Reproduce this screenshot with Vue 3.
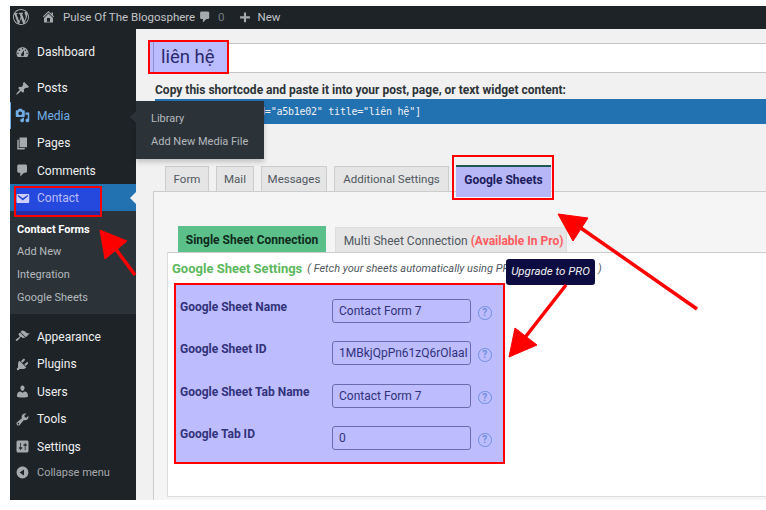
<script setup>
const icons = {
  dashboard: 'M3.76 16h12.48c1.1-1.37 1.76-3.11 1.76-5 0-4.42-3.58-8-8-8s-8 3.58-8 8c0 1.89.66 3.63 1.76 5zM10 4c.55 0 1 .45 1 1s-.45 1-1 1-1-.45-1-1 .45-1 1-1zM6 6c.55 0 1 .45 1 1s-.45 1-1 1-1-.45-1-1 .45-1 1-1zm8 0c.55 0 1 .45 1 1s-.45 1-1 1-1-.45-1-1 .45-1 1-1zm-5.37 5.55L12 7v6c0 1.1-.9 2-2 2s-2-.9-2-2c0-.57.24-1.08.63-1.45zM4 10c.55 0 1 .45 1 1s-.45 1-1 1-1-.45-1-1 .45-1 1-1zm12 0c.55 0 1 .45 1 1s-.45 1-1 1-1-.45-1-1 .45-1 1-1z',
  pin: 'M10.44 3.02l1.82-1.82 6.36 6.35-1.83 1.82c-1.05-.68-2.48-.57-3.41.36l-.75.75c-.92.93-1.04 2.35-.35 3.41l-1.83 1.82-2.41-2.41-2.8 2.79c-.42.42-3.38 2.71-3.8 2.29s1.86-3.39 2.28-3.81l2.79-2.79L4.1 9.36l1.83-1.82c1.05.69 2.48.57 3.4-.36l.75-.75c.93-.92 1.05-2.35.36-3.41z',
  media: 'M13 11V4c0-.55-.45-1-1-1h-1.67L9 1H5L3.67 3H2c-.55 0-1 .45-1 1v7c0 .55.45 1 1 1h10c.55 0 1-.45 1-1zM7 4.5c1.38 0 2.5 1.12 2.5 2.5S8.38 9.5 7 9.5 4.5 8.38 4.5 7 5.62 4.5 7 4.5zM14 6h5v10.5c0 1.38-1.12 2.5-2.5 2.5S14 17.88 14 16.5s1.12-2.5 2.5-2.5c.17 0 .34.02.5.05V9h-3V6zm-4 8.05V13h2v3.5c0 1.38-1.12 2.5-2.5 2.5S7 17.88 7 16.5 8.12 14 9.5 14c.17 0 .34.02.5.05z',
  page: 'M6 15V2h10v13H6zm-1 1h8v2H3V5h2v11z',
  comment: 'M5 2h9c1.1 0 2 .9 2 2v7c0 1.1-.9 2-2 2h-2l-5 5v-5H5c-1.1 0-2-.9-2-2V4c0-1.1.9-2 2-2z',
  email: 'M3.87 4h13.25C18.37 4 19 4.59 19 5.79v8.42c0 1.19-.63 1.79-1.88 1.79H3.87c-1.25 0-1.88-.6-1.88-1.79V5.79c0-1.2.63-1.79 1.88-1.79zm6.62 8.6l6.74-5.53c.24-.2.43-.66.13-1.07-.29-.41-.82-.42-1.17-.17l-5.7 3.86L4.8 5.83c-.35-.25-.88-.24-1.17.17-.3.41-.11.87.13 1.07z',
  appearance: 'M14.48 11.06L7.41 3.99l1.5-1.5c.5-.56 2.3-.47 3.51.32 1.21.8 1.43 1.28 2.91 2.1 1.18.64 2.45 1.26 4.45.85zm-.71.71L6.7 4.7 4.93 6.47c-.39.39-.39 1.02 0 1.41l1.06 1.06c.39.39.39 1.03 0 1.42-.6.6-1.43 1.11-2.21 1.69-.35.26-.7.53-1.01.84C1.43 13.23.4 14.8 1.2 15.6c.8.8 2.37-.23 3.71-1.57.31-.31.58-.66.85-1.02.57-.78 1.08-1.61 1.69-2.21.39-.39 1.02-.39 1.41 0l1.06 1.06c.39.39 1.02.39 1.41 0z',
  plugin: 'M13.11 4.36L9.87 7.6 8 5.73l3.24-3.24c.35-.34 1.05-.2 1.56.32.52.51.66 1.21.31 1.55zm-8 1.77l.91-1.12 9.01 9.01-1.19.84c-.71.71-2.63 1.16-3.82 1.16H6.14L4.9 17.26c-.59.59-1.54.59-2.12 0-.59-.58-.59-1.53 0-2.12l1.24-1.24v-3.88c0-1.13.4-3.19 1.09-3.89zm7.26 3.97l3.24-3.24c.34-.35 1.04-.21 1.55.31.52.51.66 1.21.31 1.55l-3.24 3.25z',
  users: 'M10 9.25c-2.27 0-2.73-3.44-2.73-3.44C7 4.02 7.82 2 9.97 2c2.16 0 2.98 2.02 2.71 3.81 0 0-.41 3.44-2.68 3.44zm0 2.57L12.72 10c2.39 0 4.52 2.33 4.52 4.53v2.49s-3.65 1.13-7.24 1.13c-3.65 0-7.24-1.13-7.24-1.13v-2.49c0-2.25 1.94-4.48 4.47-4.48z',
  tools: 'M16.68 9.77c-1.34 1.34-3.3 1.67-4.95.99l-5.41 6.52c-.99.99-2.59.99-3.58 0s-.99-2.59 0-3.57l6.52-5.42c-.68-1.65-.35-3.61.99-4.95 1.28-1.28 3.12-1.62 4.72-1.06l-2.89 2.89 2.82 2.82 2.86-2.87c.53 1.58.18 3.39-1.08 4.65zM3.81 16.21c.4.39 1.04.39 1.43 0 .4-.4.4-1.04 0-1.43-.39-.4-1.03-.4-1.43 0-.39.39-.39 1.03 0 1.43z',
  settings: 'M18 16V4c0-1.1-.9-2-2-2H4c-1.1 0-2 .9-2 2v12c0 1.1.9 2 2 2h12c1.1 0 2-.9 2-2zM8 11h1c.55 0 1 .45 1 1s-.45 1-1 1H8v1.5c0 .28-.22.5-.5.5s-.5-.22-.5-.5V13H6c-.55 0-1-.45-1-1s.45-1 1-1h1V5.5c0-.28.22-.5.5-.5s.5.22.5.5V11zm5-2h-1c-.55 0-1-.45-1-1s.45-1 1-1h1V5.5c0-.28.22-.5.5-.5s.5.22.5.5V7h1c.55 0 1 .45 1 1s-.45 1-1 1h-1v5.5c0 .28-.22.5-.5.5s-.5-.22-.5-.5V9z',
  collapse: 'M10 2.16c4.33 0 7.84 3.51 7.84 7.84s-3.51 7.84-7.84 7.84S2.16 14.33 2.16 10 5.71 2.16 10 2.16zm2 11.72V6.12L6.18 9.97z',
  home: 'M16 8.5l1.53 1.53-1.06 1.06L10 4.62l-6.47 6.47-1.06-1.06L10 2.5l4 4v-2h2v4zm-6-2.46l6 5.99V18H4v-5.97zM12 17v-5H8v5h4z',
  plus: 'M17 9v3h-5.5v5.5h-3V12H3V9h5.5V3.5h3V9z',
  wp: 'M20 10c0-5.51-4.49-10-10-10C4.48 0 0 4.49 0 10c0 5.52 4.48 10 10 10 5.51 0 10-4.48 10-10zM7.78 15.37L4.37 6.22c.55-.02 1.17-.08 1.17-.08.5-.06.44-1.13-.06-1.11 0 0-1.45.11-2.37.11-.18 0-.37 0-.58-.01C4.12 2.69 6.87 1.11 10 1.11c2.33 0 4.45.87 6.05 2.34-.68-.11-1.65.39-1.65 1.58 0 .74.45 1.36.9 2.1.35.61.55 1.36.55 2.46 0 1.49-1.4 5-1.4 5l-3.03-8.37c.54-.02.82-.17.82-.17.5-.05.44-1.25-.06-1.22 0 0-1.44.12-2.38.12-.87 0-2.33-.12-2.33-.12-.5-.03-.56 1.2-.06 1.22l.92.08 1.26 3.41zM17.41 10c.24-.64.74-1.87.43-4.25.7 1.29 1.05 2.71 1.05 4.25 0 3.29-1.73 6.24-4.4 7.78.97-2.59 1.94-5.2 2.92-7.78zM6.1 18.09C3.12 16.65 1.11 13.53 1.11 10c0-1.3.23-2.48.72-3.59C3.25 10.3 4.67 14.2 6.1 18.09zm4.03-6.63l2.58 6.98c-.86.29-1.76.45-2.71.45-.79 0-1.57-.11-2.29-.33.81-2.38 1.62-4.74 2.42-7.1z'
}
const groupA = [
  { label: 'Posts', icon: 'pin' },
  { label: 'Media', icon: 'media', state: 'media' },
  { label: 'Pages', icon: 'page' },
  { label: 'Comments', icon: 'comment' }
]
const subItems = ['Contact Forms', 'Add New', 'Integration', 'Google Sheets']
const groupB = [
  { label: 'Appearance', icon: 'appearance' },
  { label: 'Plugins', icon: 'plugin' },
  { label: 'Users', icon: 'users' },
  { label: 'Tools', icon: 'tools' },
  { label: 'Settings', icon: 'settings' }
]
const tabs = ['Form', 'Mail', 'Messages', 'Additional Settings']
const fields = [
  { label: 'Google Sheet Name', value: 'Contact Form 7' },
  { label: 'Google Sheet ID', value: '1MBkjQpPn61zQ6rOlaaI' },
  { label: 'Google Sheet Tab Name', value: 'Contact Form 7' },
  { label: 'Google Tab ID', value: '0' }
]
</script>

<template>
  <div class="page">
    <header class="adminbar">
      <svg class="bar-wp" viewBox="0 0 20 20"><path :d="icons.wp" /></svg>
      <svg class="bar-home" viewBox="0 0 20 20"><path :d="icons.home" /></svg>
      <span class="bar-site">Pulse Of The Blogosphere</span>
      <svg class="bar-comment" viewBox="0 0 20 20"><path :d="icons.comment" /></svg>
      <span class="bar-count">0</span>
      <svg class="bar-plus" viewBox="0 0 20 20"><path :d="icons.plus" /></svg>
      <span class="bar-new">New</span>
    </header>

    <div class="layout">
      <aside class="sidebar">
        <div class="row first">
          <svg class="ico" viewBox="0 0 20 20"><path :d="icons.dashboard" /></svg>
          <span>Dashboard</span>
        </div>
        <div class="group">
          <div v-for="item in groupA" :key="item.label" class="row" :class="item.state">
            <svg class="ico" viewBox="0 0 20 20"><path :d="icons[item.icon]" /></svg>
            <span>{{ item.label }}</span>
          </div>
          <div class="row contact">
            <svg class="ico" viewBox="0 0 20 20"><path :d="icons.email" /></svg>
            <span>Contact</span>
            <i class="contact-caret"></i>
            <i class="contact-mark"></i>
          </div>
        </div>
        <ul class="submenu">
          <li v-for="(s, i) in subItems" :key="s" :class="{ current: i === 0 }">{{ s }}</li>
        </ul>
        <div class="group second">
          <div v-for="item in groupB" :key="item.label" class="row">
            <svg class="ico" viewBox="0 0 20 20"><path :d="icons[item.icon]" /></svg>
            <span>{{ item.label }}</span>
          </div>
          <div class="row collapse">
            <svg class="ico" viewBox="0 0 20 20"><path :d="icons.collapse" /></svg>
            <span>Collapse menu</span>
          </div>
        </div>
        <div class="flyout">
          <i class="flyout-caret"></i>
          <div>Library</div>
          <div>Add New Media File</div>
        </div>
      </aside>

      <main class="main">
        <div class="title-input">
          <span class="title-text">liên hệ</span>
          <i class="title-mark"></i>
        </div>
        <p class="copy">Copy this shortcode and paste it into your post, page, or text widget content:</p>
        <div class="shortcode">[contact-form-7 id="a5b1e02" title="liên hệ"]</div>

        <nav class="tabs">
          <span v-for="t in tabs" :key="t" class="tab">{{ t }}</span>
          <span class="tab tab-gs">Google Sheets<i class="gs-mark"></i></span>
        </nav>

        <section class="panel">
          <div class="inner-tabs">
            <span class="itab itab-on">Single Sheet Connection</span>
            <span class="itab itab-off">Multi Sheet Connection <b>(Available In Pro)</b></span>
          </div>
          <div class="inner">
            <div class="head">
              <strong>Google Sheet Settings</strong>
              <em>( Fetch your sheets automatically using PRO</em>
              <span class="upgrade">Upgrade to PRO</span>
              <em class="close">)</em>
            </div>
            <div class="box">
              <div v-for="f in fields" :key="f.label" class="field">
                <label>{{ f.label }}</label>
                <div class="input">{{ f.value }}</div>
                <span class="help">?</span>
              </div>
            </div>
          </div>
        </section>
      </main>
    </div>

    <svg class="arrows" viewBox="0 0 766 510">
      <g fill="#ff0000" stroke="#ff0000" stroke-linejoin="round">
        <path d="M135 275L112 244" stroke-width="3.5" />
        <path d="M100 230L127 241L105 259Z" stroke-width="1" />
        <path d="M697 309L578 226" stroke-width="3.5" />
        <path d="M558 214L588 218L573 241Z" stroke-width="1" />
        <path d="M566 285L523 340" stroke-width="3.5" />
        <path d="M509 357L515 328L537 345Z" stroke-width="1" />
      </g>
    </svg>
  </div>
</template>

<style>
html, body { margin: 0; background: #fff; overflow: hidden; }
</style>

<style scoped>
.page {
  position: relative;
  width: 766px;
  height: 510px;
  box-sizing: border-box;
  padding: 6px 0 10px 10px;
  display: flex;
  flex-direction: column;
  overflow: hidden;
  background: #fff;
  font-family: Roboto, "Noto Sans", sans-serif;
  font-size: 12px;
  color: #3c434a;
}
.adminbar {
  height: 23px;
  flex: none;
  box-sizing: border-box;
  padding-bottom: 2px;
  background: #1d2327;
  color: #c3c4c7;
  display: flex;
  align-items: center;
  font-size: 11.5px;
}
.adminbar svg { fill: #a7aaad; flex: none; }
.bar-wp { width: 16px; height: 16px; margin-left: 3px; }
.bar-home { width: 15px; height: 15px; margin-left: 12px; }
.bar-site { margin-left: 7px; width: 127px; white-space: nowrap; }
.bar-comment { width: 14px; height: 14px; margin-left: 8px; }
.bar-count { margin-left: 6px; color: #787c82; }
.bar-plus { width: 14px; height: 14px; margin-left: 14px; }
.bar-new { margin-left: 5px; }

.layout { flex: 1; display: flex; min-height: 0; }

.sidebar {
  position: relative;
  width: 126px;
  flex: none;
  background: #1d2327;
  color: #f0f0f1;
  padding-top: 9.3px;
  box-sizing: border-box;
}
.row {
  position: relative;
  height: 27.4px;
  display: flex;
  align-items: center;
  padding: 1px 0 0 5px;
  box-sizing: border-box;
}
.row span { margin-left: 7px; position: relative; z-index: 2; font-size: 12px; }
.ico { width: 15px; height: 15px; fill: #a7aaad; flex: none; position: relative; z-index: 2; }
.group { margin-top: 8.6px; }
.row.media { color: #72aee6; box-shadow: inset 1px 0 0 #72aee6; }
.row.media .ico { fill: #72aee6; }
.contact { background: #2271b1; color: #bcbcff; }
.contact .ico { fill: #cfcfff; }
.contact-caret {
  position: absolute;
  right: 0;
  top: 8px;
  border: 6px solid transparent;
  border-right-color: #f1f1f1;
  border-left-width: 0;
}
.contact-mark {
  position: absolute;
  left: 4px;
  top: 2px;
  width: 88px;
  height: 31px;
  box-sizing: border-box;
  border: 2px solid #f00;
  background: rgba(40, 40, 255, 0.55);
  z-index: 3;
}
.contact .ico, .contact span { z-index: 4; }
.submenu {
  list-style: none;
  margin: 0;
  padding: 7.5px 0 4.5px;
  background: #2c3338;
  color: #b4b9be;
  font-size: 11px;
}
.submenu li { height: 22.7px; line-height: 22.7px; padding-left: 7px; }
.submenu .current { color: #fff; font-weight: 700; }
.second { margin-top: 8.8px; }
.collapse { color: #a7aaad; height: 25px; }
.collapse span { font-size: 11px; }
.flyout {
  position: absolute;
  left: 126px;
  top: 72px;
  width: 128px;
  height: 58px;
  box-sizing: border-box;
  padding: 6px 0 0 15px;
  background: #2c3338;
  color: #b4b9be;
  font-size: 11px;
  line-height: 23px;
  z-index: 6;
  box-shadow: 0 3px 5px rgba(0, 0, 0, 0.2);
}
.flyout-caret {
  position: absolute;
  left: -6px;
  top: 10px;
  border: 6px solid transparent;
  border-right-color: #2c3338;
  border-left-width: 0;
}

.main {
  flex: 1;
  min-width: 0;
  background: #f1f1f1;
  padding-top: 14px;
  padding-left: 19px;
  box-sizing: border-box;
  overflow: hidden;
}
.title-input {
  position: relative;
  height: 30px;
  margin-left: -2px;
  box-sizing: border-box;
  background: #fff;
  border: 1px solid #c3c4c7;
  border-right: 0;
  padding-left: 7px;
  font-size: 18.5px;
  line-height: 27px;
  color: #2c3338;
}
.title-text { position: relative; z-index: 2; color: #2a2a6e; }
.title-mark {
  position: absolute;
  left: -6px;
  top: -4px;
  width: 81px;
  height: 34px;
  box-sizing: border-box;
  border: 2px solid #f00;
  background: #bbbbff;
  box-shadow: inset 3px 0 0 #bbbbff, inset 4px 0 0 #8f8fd0;
  z-index: 1;
}
.copy {
  margin: 9px 0 0;
  font-size: 12px;
  line-height: 16px;
  font-weight: 700;
  color: #2c3338;
  white-space: nowrap;
}
.shortcode {
  margin-top: 1px;
  height: 25px;
  line-height: 25px;
  padding-left: 6px;
  letter-spacing: -0.25px;
  background: #2271b1;
  color: #f0f0f1;
  font-family: "DejaVu Sans Mono", "Liberation Mono", monospace;
  font-size: 10px;
  white-space: nowrap;
}
.tabs {
  margin-top: 42px;
  padding-left: 10px;
  height: 25px;
  display: flex;
  gap: 7px;
  align-items: flex-end;
}
.tab {
  height: 25px;
  box-sizing: border-box;
  border: 1px solid #ccc;
  border-bottom: 0;
  background: #e5e5e5;
  color: #50575e;
  font-size: 11.5px;
  line-height: 25px;
  text-align: center;
  white-space: nowrap;
}
.tab:nth-child(1) { width: 44px; }
.tab:nth-child(2) { width: 38px; }
.tab:nth-child(3) { width: 66px; }
.tab:nth-child(4) { width: 115px; }
.tab.tab-gs {
  position: relative;
  z-index: 2;
  margin-bottom: -6px;
  height: 32px;
  width: 95px;
  background: #b7b7f7;
  border: 0;
  border-top: 2px solid #1e5a50;
  color: #1c1c5e;
  font-weight: 700;
  font-size: 12px;
  line-height: 26px;
}
.gs-mark {
  position: absolute;
  left: -4px;
  top: -12px;
  width: 102px;
  height: 45px;
  box-sizing: border-box;
  border: 2px solid #f00;
}
.panel {
  height: 309px;
  margin-left: -2px;
  box-sizing: border-box;
  background: #f5f5f5;
  border: 1px solid #ccc;
  border-right: 0;
  border-bottom: 0;
  padding: 34px 0 0 13px;
  display: flex;
  flex-direction: column;
}
.inner-tabs { display: flex; align-items: flex-end; padding-left: 11px; gap: 9px; height: 26px; flex: none; }
.itab { box-sizing: border-box; font-size: 12px; white-space: nowrap; text-align: center; }
.itab-on {
  width: 148px;
  height: 26px;
  line-height: 28px;
  background: #5bc08a;
  color: #0f2a1c;
  font-weight: 700;
}
.itab-off {
  width: 232px;
  height: 25px;
  line-height: 26px;
  padding-left: 5px;
  background: #e5e5e5;
  border: 1px solid #ddd;
  border-bottom: 0;
  color: #50575e;
}
.itab-off b { color: #ff5a5f; font-weight: 700; }
.inner {
  flex: 1;
  background: #fff;
  border-top: 1px solid #ccc;
  border-left: 1px solid #ddd;
  border-bottom: 1px solid #ddd;
  padding: 0 0 0 6px;
  margin-bottom: 3px;
  position: relative;
}
.head {
  height: 30px;
  display: flex;
  align-items: center;
  margin-left: -2px;
  white-space: nowrap;
  color: #50575e;
}
.head strong { color: #5cb85c; font-size: 13px; margin-right: 5px; }
.head em { font-size: 11px; }
.head .close { position: absolute; left: 430px; top: 9px; }
.upgrade {
  position: absolute;
  left: 338px;
  top: 6px;
  width: 89px;
  height: 26px;
  line-height: 25px;
  text-align: center;
  border-radius: 3px;
  background: #0c0c40;
  color: #f0f0f1;
  font-style: italic;
  font-size: 11.5px;
  z-index: 3;
}
.box {
  width: 331px;
  height: 181px;
  box-sizing: border-box;
  margin-top: 0;
  background: #bcbcff;
  border: 2px solid #f00;
  padding-top: 14px;
}
.field {
  display: flex;
  align-items: flex-start;
  height: 42.4px;
  padding-left: 4px;
}
.field label {
  width: 152px;
  flex: none;
  font-size: 12px;
  font-weight: 700;
  line-height: 14px;
  padding-top: 1px;
  color: #32327a;
  white-space: nowrap;
}
.input {
  width: 139px;
  height: 24px;
  flex: none;
  box-sizing: border-box;
  border: 1px solid #6a6ab0;
  border-radius: 3px;
  padding: 0 6px;
  line-height: 22px;
  font-size: 12px;
  color: #32327a;
  overflow: hidden;
  white-space: nowrap;
}
.help {
  width: 11.5px;
  height: 11.5px;
  margin: 7px 0 0 7px;
  border: 1.5px solid #6f8fe0;
  border-radius: 50%;
  color: #6f8fe0;
  font-size: 10px;
  line-height: 11.5px;
  text-align: center;
  font-weight: 700;
  flex: none;
}
.arrows {
  position: absolute;
  inset: 0;
  width: 766px;
  height: 510px;
  pointer-events: none;
  z-index: 10;
}
</style>
